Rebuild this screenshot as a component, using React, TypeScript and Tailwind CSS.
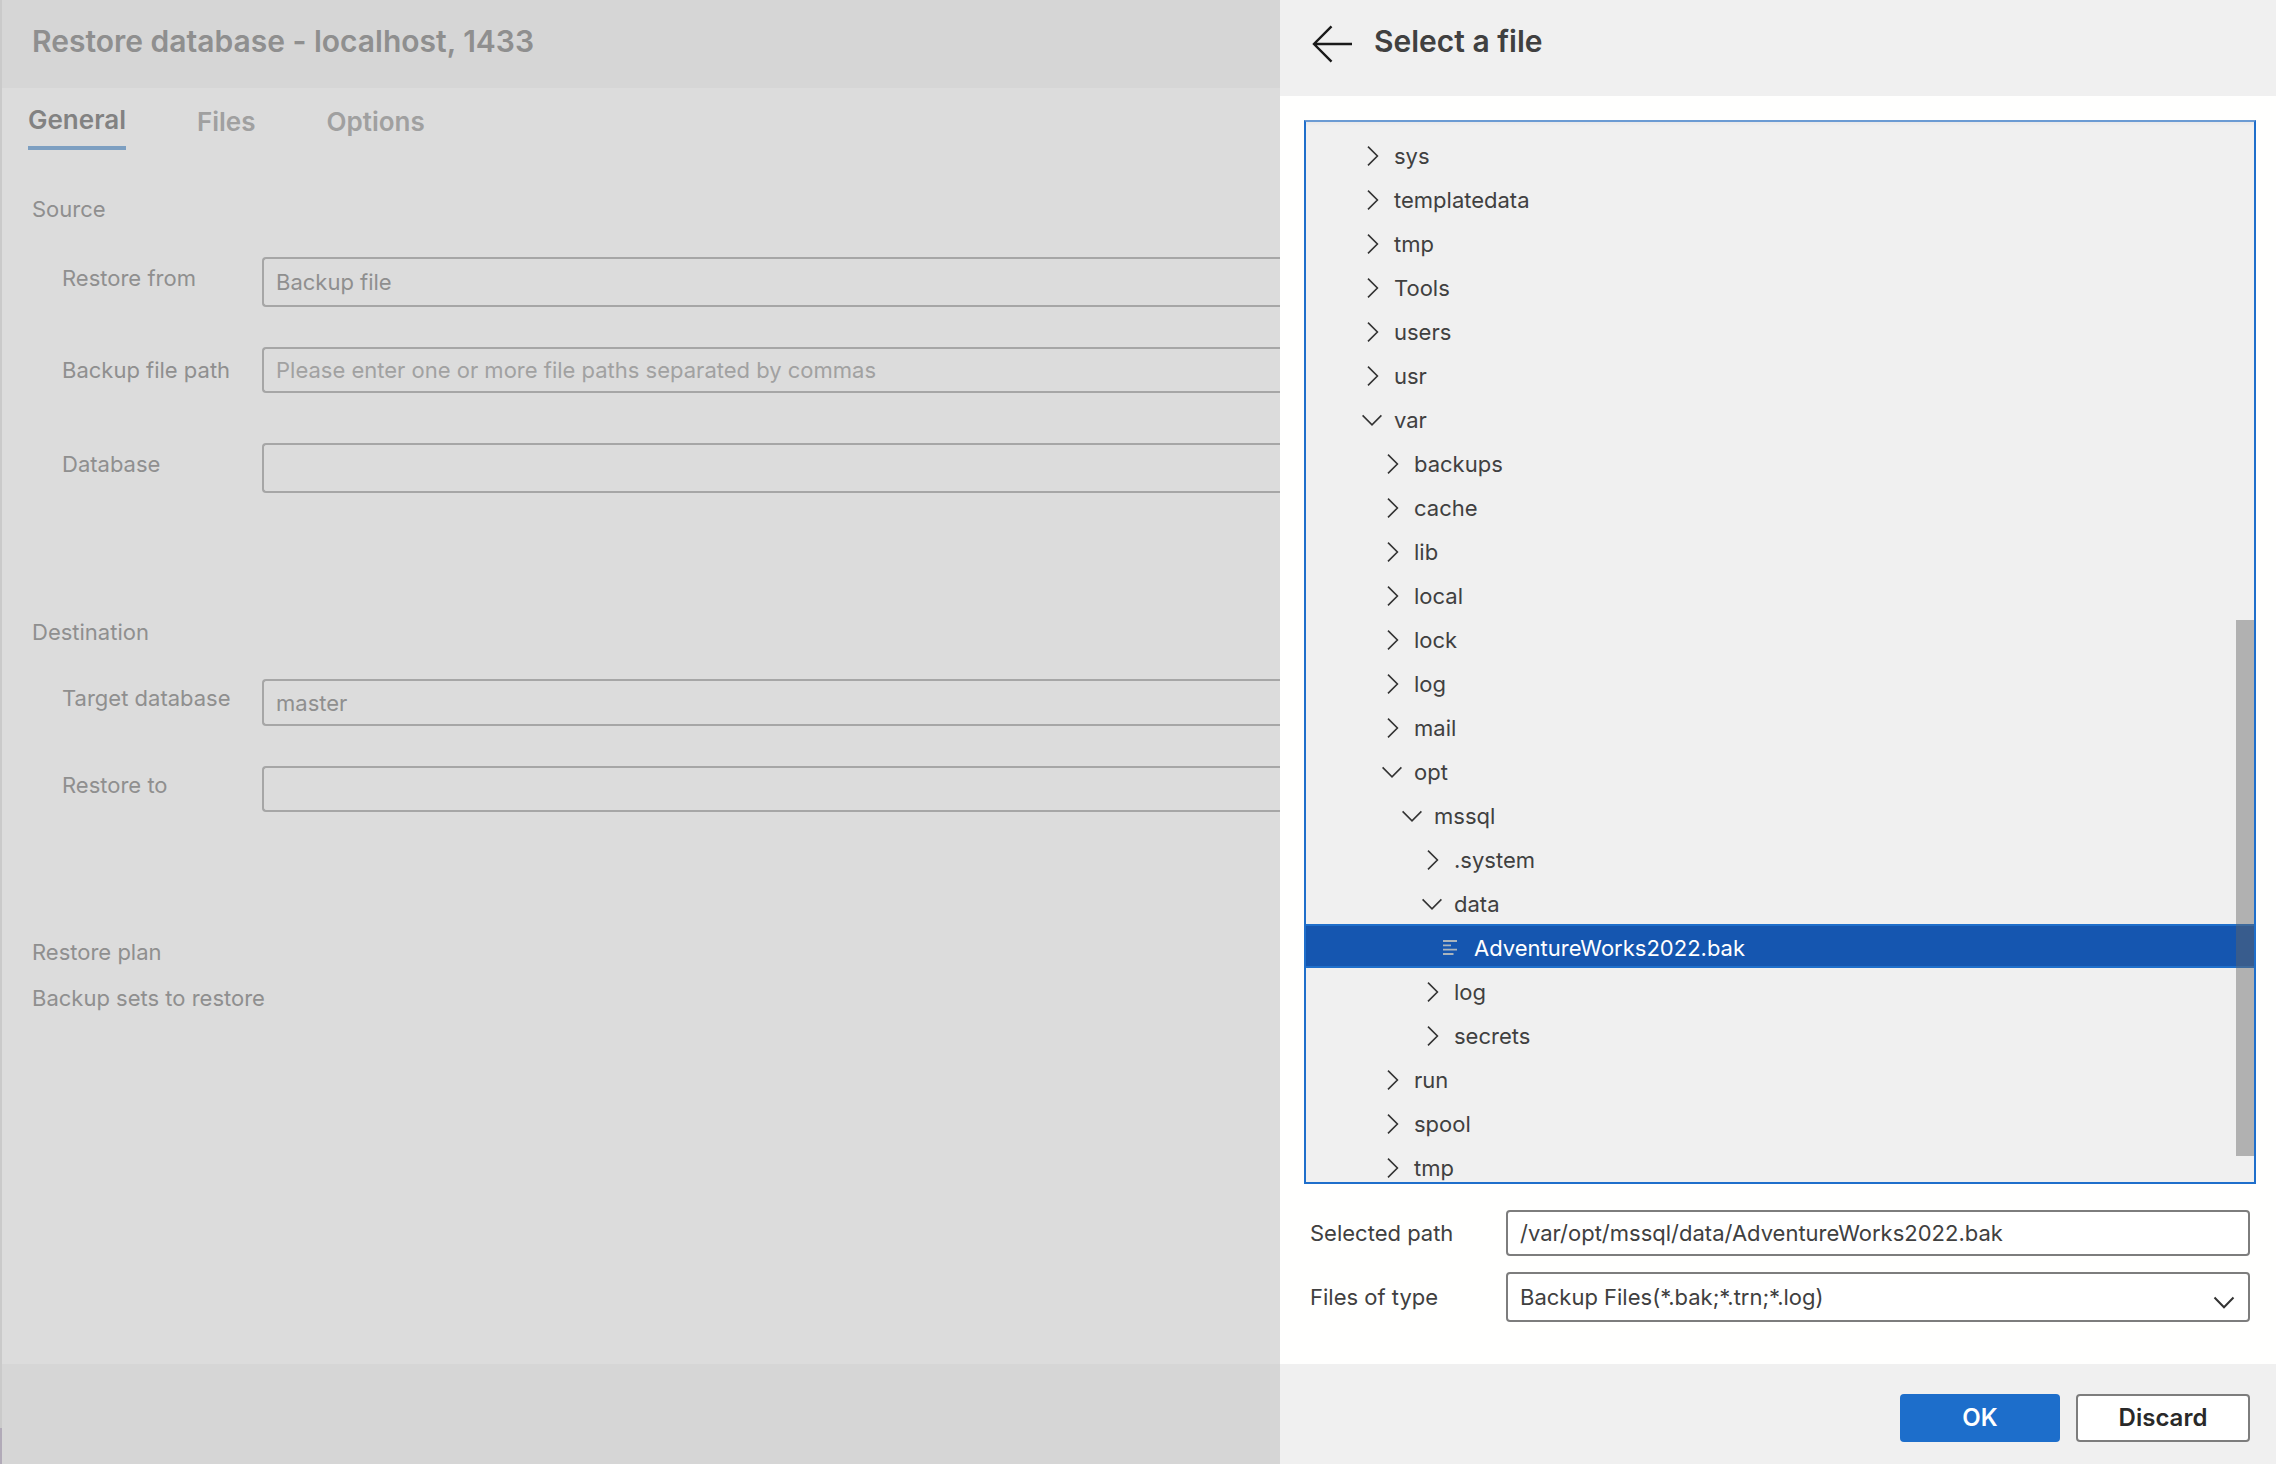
import React from "react";

type Node = { name: string; depth: number; kind?: "open" | "file" };

const nodes: Node[] = [
  { name: "sys", depth: 0 },
  { name: "templatedata", depth: 0 },
  { name: "tmp", depth: 0 },
  { name: "Tools", depth: 0 },
  { name: "users", depth: 0 },
  { name: "usr", depth: 0 },
  { name: "var", depth: 0, kind: "open" },
  { name: "backups", depth: 1 },
  { name: "cache", depth: 1 },
  { name: "lib", depth: 1 },
  { name: "local", depth: 1 },
  { name: "lock", depth: 1 },
  { name: "log", depth: 1 },
  { name: "mail", depth: 1 },
  { name: "opt", depth: 1, kind: "open" },
  { name: "mssql", depth: 2, kind: "open" },
  { name: ".system", depth: 3 },
  { name: "data", depth: 3, kind: "open" },
  { name: "AdventureWorks2022.bak", depth: 4, kind: "file" },
  { name: "log", depth: 3 },
  { name: "secrets", depth: 3 },
  { name: "run", depth: 1 },
  { name: "spool", depth: 1 },
  { name: "tmp", depth: 1 },
];

const indent = ["pl-[54px]", "pl-[74px]", "pl-[94px]", "pl-[114px]", "pl-[134px]"];

function NodeIcon({ kind }: { kind?: "open" | "file" }) {
  if (kind === "file") {
    return (
      <svg viewBox="0 0 24 24" className="size-6 shrink-0" fill="none" stroke="#a9b4bd" strokeWidth="1.8" aria-hidden="true">
        <path d="M3 5h14M3 9.300h8M3 13.700h14M3 18h10.500" />
      </svg>
    );
  }
  return (
    <svg viewBox="0 0 24 24" className="size-6 shrink-0" fill="none" stroke="#333" strokeWidth="1.6" aria-hidden="true">
      {kind === "open" ? <path d="M2.6 7.400 12 16.800 21.400 7.400" /> : <path d="M8 2.600 17.400 12 8 21.400" />}
    </svg>
  );
}

function Field({ id, label, labelPad, children }: { id: string; label: string; labelPad: string; children: React.ReactNode }) {
  return (
    <div className="grid grid-cols-[200px_1fr] items-start">
      <label htmlFor={id} className={labelPad}>
        {label}
      </label>
      {children}
    </div>
  );
}

const dimBox =
  "block w-full appearance-none rounded-l border-2 border-r-0 border-[#a6a6a6] bg-transparent px-3 text-[#8f8f8f] outline-none placeholder:text-[#a1a1a1] placeholder:opacity-100";

function RestoreDialog() {
  return (
    <section className="flex min-h-0 min-w-0 overflow-hidden bg-[#dcdcdc] text-[#8f8f8f]">
      <div className="flex w-0.5 shrink-0 flex-col bg-[#cacaca]">
        <div className="mt-auto h-9 bg-[#b1aab8]" />
      </div>
      <div className="flex min-w-0 flex-1 flex-col">
        <header className="h-22 shrink-0 bg-[#d6d6d6] pt-[21px] pl-[30px]">
          <h1 className="text-3xl leading-10 font-semibold">Restore database - localhost, 1433</h1>
        </header>
        <main className="flex-1">
          <nav className="flex items-start gap-[71px] pt-4 pl-[26px] text-[26px] leading-8 font-semibold text-[#a0a0a0]">
            <button className="border-b-4 border-[#7d9fc1] pb-2.5 text-[#828282]">General</button>
            <button className="pt-0.5">Files</button>
            <button className="pt-0.5">Options</button>
          </nav>
          <div className="pt-[45px] pl-[30px]">
            <h2>Source</h2>
            <div className="flex flex-col gap-10 pt-[34px] pl-[30px]">
              <Field id="from" label="Restore from" labelPad="pt-[7px]">
                <select id="from" className={dimBox + " h-[50px]"}>
                  <option>Backup file</option>
                </select>
              </Field>
              <Field id="path" label="Backup file path" labelPad="pt-[9px]">
                <input id="path" placeholder="Please enter one or more file paths separated by commas" className={dimBox + " h-[46px]"} />
              </Field>
              <div className="pt-2.5">
                <Field id="db" label="Database" labelPad="pt-[7px]">
                  <select id="db" className={dimBox + " h-[50px]"} />
                </Field>
              </div>
            </div>
            <h2 className="pt-[125px]">Destination</h2>
            <div className="flex flex-col gap-10 pt-[33px] pl-[30px]">
              <Field id="target" label="Target database" labelPad="pt-[5px]">
                <input id="target" defaultValue="master" className={dimBox + " h-[47px]"} />
              </Field>
              <Field id="to" label="Restore to" labelPad="pt-[5px]">
                <input id="to" className={dimBox + " h-[46px]"} />
              </Field>
            </div>
            <h2 className="pt-[126px]">Restore plan</h2>
            <p className="pt-[18px]">Backup sets to restore</p>
          </div>
        </main>
        <footer className="h-25 shrink-0 bg-[#d6d6d6]" />
      </div>
    </section>
  );
}

function FileTree() {
  return (
    <div className="relative min-h-0 flex-1 overflow-hidden border-2 border-[#1f6fcb] border-t-[#6b9bd3] bg-[#f0f0f0]">
      <div className="h-2.5 bg-linear-to-b from-[#e8e8ea] to-[#f0f0f0] to-40%" />
      <ul role="tree" aria-label="Files">
        {nodes.map((n, i) => (
          <li
            key={i}
            role="treeitem"
            aria-selected={n.kind === "file"}
            className={
              "flex h-11 items-center gap-2.5 pt-1 " +
              indent[n.depth] +
              (n.kind === "file" ? " border-y-2 border-[#1f6fcb] bg-[#1556b0] text-white" : "")
            }
          >
            <NodeIcon kind={n.kind} />
            <span>{n.name}</span>
          </li>
        ))}
      </ul>
      <div className="absolute top-[47%] -right-0.5 bottom-[26px] w-5 bg-[#646464]/45" />
    </div>
  );
}

const fieldBox = "h-full w-full appearance-none rounded border-2 border-[#7d7d7d] bg-white px-3 outline-none";

function FilePanel() {
  return (
    <section className="flex min-h-0 min-w-0 flex-col bg-[#fffffe] text-[#404040]">
      <header className="flex h-24 shrink-0 items-start gap-5 bg-[#f0f0f0] pt-[21px] pl-8">
        <button aria-label="Back" className="pt-[3px]">
          <svg viewBox="0 0 42 40" className="h-10 w-[42px]" fill="none" stroke="#1a1a1a" strokeWidth="2.4" aria-hidden="true">
            <path d="M40 20H2M19.500 2.400 2 20l17.500 17.600" />
          </svg>
        </button>
        <h1 className="text-3xl leading-10 font-semibold">Select a file</h1>
      </header>
      <main className="flex min-h-0 flex-1 flex-col pt-6 pr-5 pb-[42px] pl-6">
        <FileTree />
        <div className="grid grid-cols-[196px_1fr] items-center gap-y-4 pt-[26px] pr-1.5 pl-1.5">
          <label htmlFor="selected">Selected path</label>
          <div className="h-[46px]">
            <input id="selected" defaultValue="/var/opt/mssql/data/AdventureWorks2022.bak" className={fieldBox} />
          </div>
          <label htmlFor="type">Files of type</label>
          <div className="relative h-[50px]">
            <select id="type" className={fieldBox}>
              <option>Backup Files(*.bak;*.trn;*.log)</option>
            </select>
            <svg viewBox="0 0 22 14" className="pointer-events-none absolute right-[15px] bottom-3 h-3.5 w-[22px]" fill="none" stroke="#333" strokeWidth="2" aria-hidden="true">
              <path d="M1.500 1.500 11 11.200l9.500-9.700" />
            </svg>
          </div>
        </div>
      </main>
      <footer className="flex h-25 shrink-0 items-start justify-end gap-4 bg-[#f0f0f0] pt-[30px] pr-[26px] text-2xl font-semibold">
        <button className="h-12 w-40 rounded bg-[#1d6ecb] text-white">OK</button>
        <button className="h-12 w-[174px] rounded border-2 border-[#7d7d7d] bg-white text-[#292929]">Discard</button>
      </footer>
    </section>
  );
}

export default function App() {
  return (
    <div className="grid h-screen grid-cols-[1280fr_996fr] grid-rows-1 font-['Inter',sans-serif] text-[22px] leading-7">
      <RestoreDialog />
      <FilePanel />
    </div>
  );
}
